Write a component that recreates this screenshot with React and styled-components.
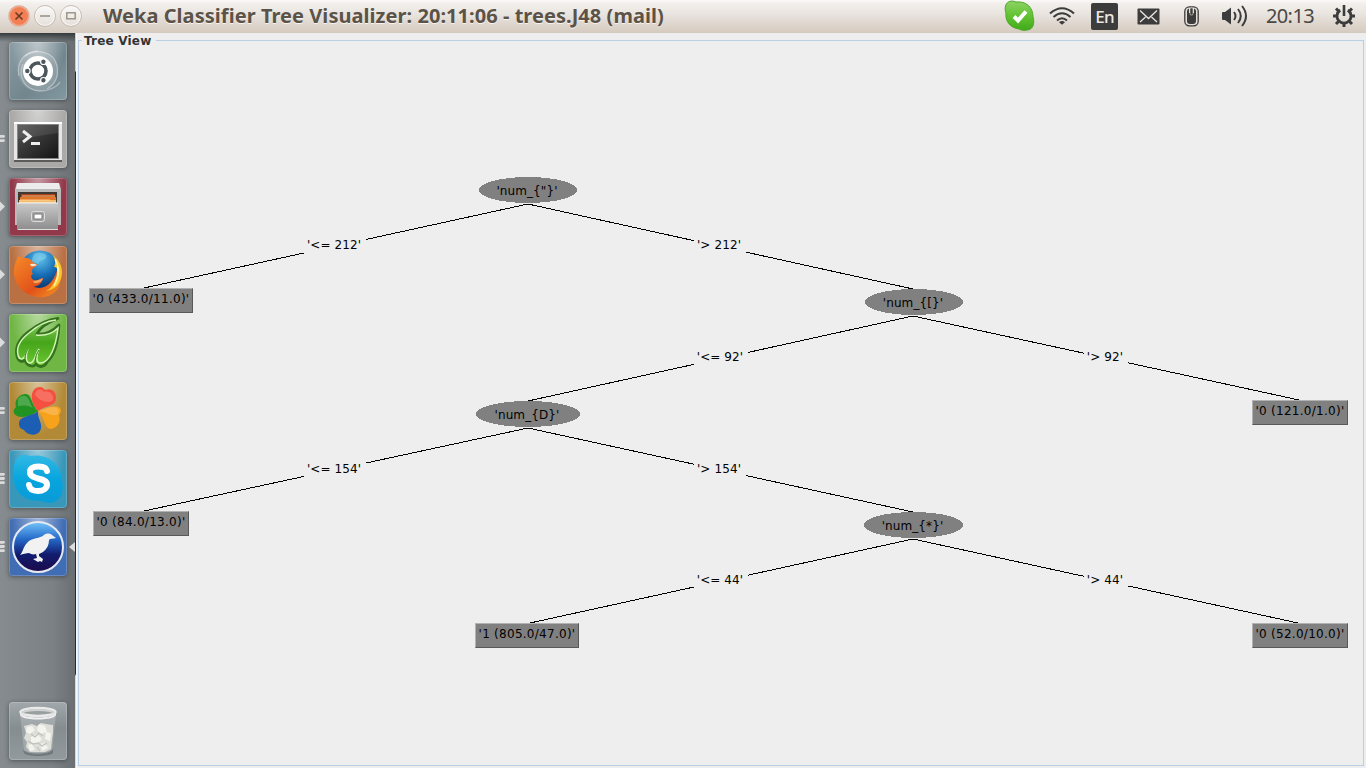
import React from "react";
import styled, { createGlobalStyle } from "styled-components";

const GlobalStyle = createGlobalStyle`
  * { box-sizing: border-box; }
  body { margin: 0; overflow: hidden; background: #eee; }
`;

const Screen = styled.div`
  display: flex;
  flex-direction: column;
  width: 1366px;
  height: 768px;
  background: #eeeeee;
`;

const TopBar = styled.header`
  display: flex;
  align-items: center;
  height: 33px;
  flex: none;
  padding: 0 10px 0 8px;
  background: linear-gradient(#fbfaf9 0, #f3f0ed 3px, #e9e4df 14px, #d5cabf 33px);
`;

const WindowButton = styled.span`
  display: flex;
  align-items: center;
  justify-content: center;
  width: 22px;
  height: 22px;
  margin: -1px 4px 0 0;
  border-radius: 50%;
  border: 1px solid ${(p) => (p.$close ? "#d9bfb0" : "#c6beb5")};
  background: ${(p) =>
    p.$close
      ? "radial-gradient(circle at 50% 50%, #f37f55 0 60%, #ee7248 75%, #f3b49c 100%)"
      : "linear-gradient(#faf9f8, #e5dfd9)"};
  box-shadow: inset 0 0 0 1px ${(p) => (p.$close ? "#f3b096" : "#fbfaf9")};
`;

const Title = styled.h1`
  flex: 1;
  margin: -2px 0 0 17px;
  font: 700 20px/30px "Noto Sans", "Open Sans", sans-serif;
  letter-spacing: ${(p) => p.$tracking}px;
  color: #5b5248;
  white-space: nowrap;
  text-shadow: 0 1px 0 #f8f3ee;
`;

const Tray = styled.div`
  display: flex;
  align-items: center;
  height: 33px;
`;

const TrayItem = styled.span`
  display: flex;
  flex: none;
  justify-content: center;
  width: ${(p) => p.$w}px;
  margin: -1px ${(p) => p.$gap || 0}px 0 0;
  svg { display: block; }
`;

const Language = styled.span`
  width: 27px;
  height: 27px;
  border-radius: 2px;
  background: #3c3c3c;
  color: #ece7e1;
  font: 500 17px/27px "Noto Sans", sans-serif;
  letter-spacing: -0.7px;
  text-align: center;
`;

const Clock = styled.span`
  font: 400 20px/30px "Noto Sans", sans-serif;
  letter-spacing: -0.6px;
  color: #4a4742;
  white-space: nowrap;
`;

const Body = styled.div`
  display: flex;
  flex: 1;
  min-height: 0;
`;

const Dock = styled.nav`
  display: flex;
  flex-direction: column;
  gap: 10px;
  width: 75px;
  flex: none;
  padding: 9px 0 8px;
  background:
    linear-gradient(#34393c, rgba(100, 106, 109, 0) 9px),
    linear-gradient(90deg, #858b8e, #7c8184 70%, #6a6f73);
`;

const DockRow = styled.div`
  display: flex;
  align-items: center;
  height: 58px;
  margin-top: ${(p) => (p.$last ? "auto" : 0)};
`;

const Marker = styled.span`
  width: 9px;
  height: 24px;
  flex: none;
  svg { display: block; }
`;

const ActiveMarker = styled.span`
  width: 6px;
  height: 10px;
  margin-left: 2px;
  background: #dcdcdc;
  clip-path: polygon(100% 0, 100% 100%, 0 50%);
`;

const Tile = styled.span`
  width: 58px;
  height: 58px;
  flex: none;
  border-radius: 4px;
  background: ${(p) => p.$bg};
  box-shadow: inset 0 0 0 1px rgba(255, 255, 255, 0.2), 0 1px 4px rgba(30, 35, 38, 0.5);
  svg { display: block; }
`;

const DockEdge = styled.div`
  width: 1px;
  flex: none;
  background: linear-gradient(#c9cbcc 0 38px, #3b1f30 39px 641px, #d8dada 643px);
`;

const Window = styled.main`
  display: flex;
  flex: 1;
  padding: 7px 2px 2px 0;
  border-left: 1px solid #f8f8f8;
`;

const TreePanel = styled.section`
  position: relative;
  flex: 1;
  margin-left: 1px;
  border: 1px solid #b8cfe5;
`;

const PanelTitle = styled.h2`
  position: absolute;
  left: 3px;
  top: -8px;
  width: 74px;
  margin: 0;
  padding-left: 2px;
  background: #eeeeee;
  color: #333;
  font: 700 12px/17px "DejaVu Sans", sans-serif;
  letter-spacing: ${(p) => p.$tracking}px;
  white-space: nowrap;
`;

/* The canvas spans the window's full pixel grid so that nodes use screen coordinates. */
const TreeCanvas = styled.div`
  position: absolute;
  left: -79px;
  top: -41px;
  width: 1366px;
  height: 768px;
  font: 400 12px/15px "DejaVu Sans", sans-serif;
  color: #000;
  white-space: nowrap;
`;

const Edges = styled.svg`
  position: absolute;
  inset: 0;
`;

const Placed = styled.div`
  position: absolute;
  left: ${(p) => p.$x}px;
  top: ${(p) => p.$y}px;
  width: ${(p) => p.$w}px;
  display: flex;
  justify-content: center;
`;

const Decision = styled(Placed)`
  height: 26px;
  align-items: center;
  padding: 2px 2px 0 0;
  letter-spacing: 0.1px;
`;

const Leaf = styled(Placed)`
  height: 25px;
  padding-top: 3px;
  background: #808080;
  border: 1px solid;
  border-color: #b2b2b2 #595959 #595959 #b2b2b2;
  letter-spacing: 0.27px;
`;

const Condition = styled(Placed)`
  height: 24px;
  align-items: center;
  padding-right: 2px;
  background: #eeeeee;
  letter-spacing: 0.1px;
`;

const decisions = [
  { x: 479, y: 177, w: 98, text: "'num_{\"}'" },
  { x: 865, y: 289, w: 98, text: "'num_{[}'" },
  { x: 476, y: 401, w: 104, text: "'num_{D}'" },
  { x: 864, y: 512, w: 99, text: "'num_{*}'" },
];

const leaves = [
  { x: 89, y: 288, w: 104, text: "'0 (433.0/11.0)'" },
  { x: 1252, y: 400, w: 96, text: "'0 (121.0/1.0)'" },
  { x: 93, y: 511, w: 96, text: "'0 (84.0/13.0)'" },
  { x: 475, y: 623, w: 104, text: "'1 (805.0/47.0)'" },
  { x: 1252, y: 623, w: 96, text: "'0 (52.0/10.0)'" },
];

const conditions = [
  { x: 304, y: 233, w: 62, text: "'<= 212'" },
  { x: 694, y: 233, w: 52, text: "'> 212'" },
  { x: 694, y: 345, w: 54, text: "'<= 92'" },
  { x: 1084, y: 345, w: 44, text: "'> 92'" },
  { x: 304, y: 457, w: 62, text: "'<= 154'" },
  { x: 694, y: 457, w: 52, text: "'> 154'" },
  { x: 694, y: 568, w: 54, text: "'<= 44'" },
  { x: 1084, y: 568, w: 44, text: "'> 44'" },
];

const edges = [
  [528, 204, 144, 288], [528, 204, 913, 289],
  [913, 316, 528, 401], [913, 316, 1299, 400],
  [528, 428, 144, 511], [528, 428, 913, 512],
  [913, 539, 530, 623], [913, 539, 1298, 623],
];

const Tree = () => (
  <TreeCanvas>
    <Edges width="1366" height="768" shapeRendering="crispEdges">
      {edges.map(([x1, y1, x2, y2], i) => (
        <line key={i} x1={x1} y1={y1} x2={x2} y2={y2} stroke="#000" strokeWidth="1" />
      ))}
      {decisions.map((d) => (
        <ellipse key={d.text} cx={d.x + d.w / 2} cy={d.y + 13} rx={d.w / 2} ry="13" fill="#808080" />
      ))}
    </Edges>
    {conditions.map((c) => (
      <Condition key={c.text} $x={c.x} $y={c.y} $w={c.w}>{c.text}</Condition>
    ))}
    {decisions.map((d) => (
      <Decision key={d.text} $x={d.x} $y={d.y} $w={d.w}>{d.text}</Decision>
    ))}
    {leaves.map((l) => (
      <Leaf key={l.text} $x={l.x} $y={l.y} $w={l.w}>{l.text}</Leaf>
    ))}
  </TreeCanvas>
);

const Icon = ({ children }) => <svg width="58" height="58" viewBox="0 0 58 58">{children}</svg>;

const UbuntuIcon = () => (
  <Icon>
    <g fill="none" stroke="#fff" strokeWidth="1.3">
      <circle cx="29" cy="29" r="20" fill="#fff" fillOpacity=".12" stroke="none" />
      <path d="M16 14C27 6 45 9 48 24c2 12-3 19-10 23" strokeOpacity=".35" />
      <path d="M10 34C7 20 15 10 29 9M14 22c-6 14 3 26 17 27 9 0 17-4 20-9" strokeOpacity=".35" />
    </g>
    <circle cx="29" cy="29" r="15" fill="#fff" />
    <circle cx="29" cy="29" r="8" fill="none" stroke="#4c565b" strokeWidth="3.6" />
    <g fill="#4c565b" stroke="#fff" strokeWidth="1.2">
      <circle cx="18.3" cy="29" r="2.8" />
      <circle cx="34.4" cy="19.7" r="2.8" />
      <circle cx="34.4" cy="38.3" r="2.8" />
    </g>
  </Icon>
);

const TerminalIcon = () => (
  <Icon>
    <defs>
      <linearGradient id="term" x1="0" y1="0" x2="1" y2="1">
        <stop offset="0" stopColor="#555" /><stop offset=".5" stopColor="#333" /><stop offset="1" stopColor="#151515" />
      </linearGradient>
    </defs>
    <rect x="5" y="50" width="48" height="2" fill="#5b5b5b" />
    <rect x="5" y="12" width="48" height="38" fill="#e6e6e6" />
    <rect x="5" y="12" width="48" height="2" fill="#fff" />
    <rect x="8.500" y="14.500" width="41" height="34" fill="url(#term)" stroke="#858585" />
    <path d="M9 29L49 23V15H9z" fill="#fff" opacity=".09" />
    <path d="M14 21l7 5.500L14 32" fill="none" stroke="#eee" strokeWidth="3" />
    <rect x="22" y="32" width="9" height="3" fill="#eee" />
  </Icon>
);

const FilesIcon = () => (
  <Icon>
    <defs>
      <linearGradient id="cab" x1="0" y1="0" x2="0" y2="1">
        <stop offset="0" stopColor="#c9c9c9" /><stop offset="1" stopColor="#8c8c8c" />
      </linearGradient>
    </defs>
    <path d="M8 5h42l2 6v36H6V11z" fill="#b9b9b9" />
    <path d="M8 5h42l1 6H7z" fill="#ececec" />
    <rect x="9" y="14" width="39" height="16" fill="#3f3733" />
    <path d="M12 16h34v4H12z" fill="#ad4216" />
    <path d="M11 19h36v4H11z" fill="#e0752a" />
    <path d="M10 22h37v4H10z" fill="#f5bb6d" />
    <path d="M13 18h33M11 22h30M10 24.500h37" stroke="#ffe0a5" strokeWidth=".8" />
    <path d="M8 25h41v27H8z" fill="url(#cab)" />
    <path d="M8 25h41" stroke="#eee" />
    <path d="M9 51.500h40" stroke="#e0e0e0" />
    <rect x="22.500" y="33.500" width="13" height="10" rx="2" fill="#a3a3a3" stroke="#ddd" />
    <rect x="25" y="36" width="8" height="5" rx="1" fill="#fff" stroke="#777" />
  </Icon>
);

const FirefoxIcon = () => (
  <Icon>
    <defs>
      <radialGradient id="globe" cx=".5" cy=".2" r=".8">
        <stop offset="0" stopColor="#62c3ec" /><stop offset=".5" stopColor="#176fb7" /><stop offset="1" stopColor="#0a285f" />
      </radialGradient>
      <linearGradient id="fox" x1="0" y1="0" x2="1" y2="1">
        <stop offset="0" stopColor="#f58a28" /><stop offset=".6" stopColor="#e2521a" /><stop offset="1" stopColor="#f39a22" />
      </linearGradient>
    </defs>
    <circle cx="31" cy="25" r="20.500" fill="url(#globe)" />
    <path d="M25 8c5-3 15 0 12 4-2 3-8 1-7 6l-8-2z" fill="#8ed5ee" opacity=".5" />
    <path d="M8 13c1-3 3-3 5-1 4-1 8 0 10 3 1 2 3 3 5 3 0 2-2 3-4 4-1 2-2 4 0 6-3 1-2 5 1 6 3 2 6-2 9-2-1 6-6 9-10 8 9 6 22-2 25-20 3 5 4 11 2 17C49 48 36 54 24 50 9 46 2 31 6 18z" fill="url(#fox)" />
    <path d="M42 8c5 4 5 9 3 13 6-1 4 12-1 17-1 3-5 6-7 7 10-1 16-9 16-19 0-7-4-14-11-18z" fill="#fbc42c" />
    <path d="M46 13c4 7 4 17 0 24M49 20c2 7 0 13-4 20" fill="none" stroke="#fff2a0" strokeWidth="1.500" />
    <path d="M21 18q4-1 7 1-3 2-6 1z" fill="#ffe5d3" />
    <path d="M24 35q7-1 10-3-1 6-9 5z" fill="#f6a25a" />
  </Icon>
);

const MidoriIcon = () => (
  <Icon>
    <defs>
      <linearGradient id="leaf" x1="0" y1="0" x2="0" y2="1">
        <stop offset="0" stopColor="#8fd06a" /><stop offset=".5" stopColor="#46a51a" /><stop offset="1" stopColor="#6cc832" />
      </linearGradient>
    </defs>
    <path d="M49 4.500C37 6 28 11 19 18 10 25 6 33 8 42c1 5 5 7 8 4 2 6 8 8 11 4 3 4 9 3 11-2 7-6 11-18 12-37C45 16 38 21 28 20c3-7 12-12 21-15.500z" fill="url(#leaf)" stroke="#34731d" strokeWidth="2.800" strokeLinejoin="round" />
    <path d="M47 6C37 7 28 12 20 19 11 26 7 33 9 41c1 5 5 5 7 1l3-7c-3 7-2 14 2 14 5 0 5-9 9-14-3 7-3 14 1 14 10 0 16-17 18-35C44 19 36 22 27 21" fill="none" stroke="#d4f5b5" strokeWidth="1.500" />
    <path d="M16 44c0-4 2-7 3-9M26 49c0-6 2-10 4-13" stroke="#32791b" strokeWidth="1" fill="none" />
  </Icon>
);

const CloverIcon = () => (
  <Icon>
    <path d="M29 29C19 18 22 5 31 5c3 0 4 2 5 3 7-3 12 3 11 9-1 8-12 7-18 12z" fill="#f5503f" />
    <path d="M29 29C20 36 8 37 5 31c-1-3 1-5 2-6 -2-6 2-12 9-13 7-1 6 11 13 17z" fill="#219322" />
    <path d="M29 29c7-2 17-7 22-3 2 3 0 6-1 7 2 6-1 13-8 14-7 0-6-12-13-18z" fill="#f7a21b" />
    <path d="M29 29c-6 6-19 4-19 13 0 4 3 5 5 6 3 5 12 7 16 1 4-7-3-12-2-20z" fill="#1d5eb5" />
    <path d="M26 13c1-6 6-7 9-3 6-2 10 3 9 8-4 4-10 1-14-1z" fill="#fff" opacity=".18" />
    <path d="M9 17c4-5 9-4 11 1 2 4 2 6 4 8-5-3-9-3-15-2zM30 29c8-3 15-6 19-2 2 2 0 4-1 6-6 1-11-3-18-4z" fill="#fff" opacity=".2" />
  </Icon>
);

const SkypeIcon = () => (
  <Icon>
    <defs>
      <linearGradient id="sky" x1="0" y1="0" x2="0" y2="1">
        <stop offset="0" stopColor="#32b9e4" /><stop offset=".5" stopColor="#08a5df" /><stop offset="1" stopColor="#099bd6" />
      </linearGradient>
    </defs>
    <path d="M6 12C8 5 15 3 21 6c16-3 31 6 32 24 2 9 0 18-6 21-5 3-10 2-14 0C17 52 4 43 5 27c-1-5-1-10 1-15z" fill="url(#sky)" />
    <path d="M38 21c-.5-3-4-4.500-8.500-4.500-6 0-9 2.500-8.500 6 .5 8 17 4.500 17 12 0 4-4 6.500-9 6.500-5.500 0-8.500-2-9-6" fill="none" stroke="#fff" strokeWidth="6" strokeLinecap="round" />
  </Icon>
);

const WekaIcon = () => (
  <Icon>
    <defs>
      <linearGradient id="weka" x1="0" y1="0" x2="0" y2="1">
        <stop offset="0" stopColor="#72c4fa" /><stop offset=".35" stopColor="#2467c7" /><stop offset=".65" stopColor="#121c6f" /><stop offset="1" stopColor="#1c0a48" />
      </linearGradient>
    </defs>
    <circle cx="29" cy="29" r="25" fill="url(#weka)" stroke="#e7e9f1" strokeWidth="2" />
    <path d="M11 37c3-3 3-8 7-12 5-6 13-4 17-8 2-2 6-2 8 0l4 3c-3 1-6 0-7 2 0 5-2 9-6 12l-4 2 0 2 4 3-1 3-2-1-2 1-5-3 4-1-1-4c-3 1-5 0-7-1-3 0-6 1-9 2z" fill="#f2f2f2" />
  </Icon>
);

const TrashIcon = () => (
  <Icon>
    <path d="M11 12l4 37c1 5 27 5 28 0l4-37z" fill="#d7dbdd" fillOpacity=".3" />
    <path d="M14 47c3 6 26 6 30 0v4c-4 4-26 4-29 0z" fill="#596064" opacity=".6" />
    <path d="M15 24l8-2 5 2 4-3 5 1 7 1v8l-1 6-1 10-6 3H21l-4-5 1-5-3-4 2-5z" fill="#deded9" />
    <g fill="#f4f4ef">
      <path d="M18 25l5-1 3 4-5 4-4-2zM30 22l6 2 2 6-7 2-3-5zM37 30l5 1-1 8-5-2zM22 35l6-3 5 5-5 5-6-2zM19 43l4-1 3 6-5 1zM31 42l5-1 3 5-6 3z" />
    </g>
    <path d="M22 32l4 3 4-4 4 3M19 39l5 3 5-1 4 3 5-3M28 45l3 4" fill="none" stroke="#bfc0ba" strokeWidth="1.200" />
    <ellipse cx="29" cy="10" rx="17.500" ry="4" fill="#999e9f" stroke="#e9eae9" strokeWidth="2.500" />
    <path d="M11 11c2 6 34 6 36 0v2c-2 6-34 6-36 0z" fill="#f0f1f0" />
    <path d="M13 11c4-4 28-4 32 0" fill="none" stroke="#cfd2d2" strokeWidth="2" />
  </Icon>
);

const glossy = (color) => `radial-gradient(ellipse at 50% -5%, rgba(255,255,255,.5), rgba(255,255,255,0) 65%), ${color}`;

const launchers = [
  { name: "dash", icon: UbuntuIcon, bg: glossy("linear-gradient(135deg, #8b9da4, #72868e 60%, #839aa1)") },
  { name: "terminal", icon: TerminalIcon, bg: glossy("#aaa9a8"), marks: 2 },
  { name: "files", icon: FilesIcon, bg: glossy("#91384a"), marks: 1 },
  { name: "firefox", icon: FirefoxIcon, bg: glossy("#b97043"), marks: 1 },
  { name: "midori", icon: MidoriIcon, bg: glossy("#70b644"), marks: 1 },
  { name: "clover", icon: CloverIcon, bg: glossy("#b28a37"), marks: 2 },
  { name: "skype", icon: SkypeIcon, bg: glossy("#3997b9"), marks: 3 },
  { name: "weka", icon: WekaIcon, bg: glossy("#416db4"), marks: 3, active: true },
  { name: "trash", icon: TrashIcon, bg: "linear-gradient(#a1a7aa, #858d91 45%, #929a9e)", last: true },
];

const RunningMarks = ({ count = 0 }) => (
  <Marker>
    <svg width="9" height="24" viewBox="0 0 9 24">
      {count === 1 && <path d="M0 6.500l5 5-5 5z" fill="#dcdcdc" />}
      {count > 1 &&
        Array.from({ length: count }, (_, i) => (
          <path
            key={i}
            d={`M0 ${11.5 + (i - (count - 1) / 2) * 4.2}H3.500`}
            stroke="#dadada"
            strokeWidth="2.8"
            strokeLinecap="round"
          />
        ))}
    </svg>
  </Marker>
);

const SkypeStatus = () => (
  <svg width="31" height="32" viewBox="0 0 31 32">
    <defs>
      <linearGradient id="status" x1="0" y1="0" x2="0" y2="1">
        <stop offset="0" stopColor="#8ed266" /><stop offset=".5" stopColor="#62c331" /><stop offset="1" stopColor="#42a91b" />
      </linearGradient>
    </defs>
    <path d="M1.500 6C3 1 8 0 12 2c10-1 17 5 17 15 2 6 0 13-6 13-3 1-6 0-8-1C6 28 1 21 2 13 1 11 1 8 1.500 6z" fill="url(#status)" stroke="#4aa927" />
    <path d="M10 16.500l4 4 8-9" fill="none" stroke="#fff" strokeWidth="4" />
  </svg>
);

const WifiIcon = () => (
  <svg width="26" height="20" viewBox="0 0 26 20" fill="none" stroke="#3c3c3c" strokeWidth="2">
    <path d="M1 7.500Q13-3 25 7.500M4.500 11Q13 3.500 21.500 11M8 14.500Q13 10 18 14.500" />
    <path d="M13 18.800l-3-2.600q3-2.200 6 0z" fill="#3c3c3c" stroke="none" />
  </svg>
);

const MailIcon = () => (
  <svg width="23" height="17" viewBox="0 0 23 17">
    <rect x=".5" y=".5" width="22" height="16" rx="1" fill="#3c3c3c" />
    <path d="M3 2.500l8.500 8 8.500-8M3 14l5.500-5M20 14l-5.500-5" fill="none" stroke="#e9e4df" strokeWidth="1.300" />
  </svg>
);

const MouseIcon = () => (
  <svg width="15" height="21" viewBox="0 0 15 21">
    <rect x=".8" y=".8" width="13.400" height="19" rx="4.500" fill="#e5dfd9" stroke="#3c3c3c" strokeWidth="1.300" />
    <path d="M3 7h9v8q0 3-3 3H6q-3 0-3-3zM3 7V5q0-2 2-2.500V7zM12 7V5q0-2-2-2.500V7z" fill="#3c3c3c" />
    <rect x="6" y="2" width="3" height="7" rx="1" fill="#3c3c3c" stroke="#e5dfd9" strokeWidth=".6" />
  </svg>
);

const VolumeIcon = () => (
  <svg width="27" height="24" viewBox="0 0 27 24">
    <path d="M1 9Q1 8 2 8h2l6-4.500v17L4 16H2q-1 0-1-1z" fill="#3c3c3c" />
    <path d="M13 8q3 4 0 8M17 5q5.500 7 0 14M21 2q8 10 0 20" fill="none" stroke="#3c3c3c" strokeWidth="2" />
  </svg>
);

const SessionIcon = () => (
  <svg width="24" height="24" viewBox="0 0 24 24" fill="none" stroke="#3c3c3c">
    <path d="M8.200 6.200a7 7 0 1 0 7.600 0" strokeWidth="2.800" />
    <path d="M12 1v11" strokeWidth="2.600" />
    <path d="M12 19v4M5 12H1M19 12h4M7 17l-3 3M17 17l3 3M6.500 7L4 4.500M17.500 7L20 4.500" strokeWidth="3" />
  </svg>
);

export default function App() {
  return (
    <Screen>
      <GlobalStyle />
      <TopBar>
        <WindowButton $close>
          <svg width="10" height="10"><path d="M1.500 1.500l7 7M8.500 1.500l-7 7" stroke="#6b3a27" strokeWidth="1.600" /></svg>
        </WindowButton>
        <WindowButton>
          <svg width="10" height="10"><path d="M0 5h10" stroke="#958f83" strokeWidth="1.500" /></svg>
        </WindowButton>
        <WindowButton>
          <svg width="10" height="8"><rect x=".8" y=".8" width="8.400" height="6" fill="none" stroke="#958f83" strokeWidth="1.400" /></svg>
        </WindowButton>
        <Title $tracking={0.05}>Weka Classifier Tree Visualizer: 20:11:06 - trees.J48 (mail)</Title>
        <Tray>
          <TrayItem $w={31} $gap={14}><SkypeStatus /></TrayItem>
          <TrayItem $w={26} $gap={16}><WifiIcon /></TrayItem>
          <TrayItem $w={27} $gap={19}><Language>En</Language></TrayItem>
          <TrayItem $w={23} $gap={24}><MailIcon /></TrayItem>
          <TrayItem $w={15} $gap={22}><MouseIcon /></TrayItem>
          <TrayItem $w={27} $gap={17}><VolumeIcon /></TrayItem>
          <TrayItem $w={50} $gap={17}><Clock>20:13</Clock></TrayItem>
          <TrayItem $w={24}><SessionIcon /></TrayItem>
        </Tray>
      </TopBar>
      <Body>
        <Dock>
          {launchers.map(({ name, icon: Glyph, bg, marks, active, last }) => (
            <DockRow key={name} $last={last}>
              <RunningMarks count={marks} />
              <Tile $bg={bg}><Glyph /></Tile>
              {active && <ActiveMarker />}
            </DockRow>
          ))}
        </Dock>
        <DockEdge />
        <Window>
          <TreePanel>
            <Tree />
            <PanelTitle $tracking={0.2}>Tree View</PanelTitle>
          </TreePanel>
        </Window>
      </Body>
    </Screen>
  );
}
